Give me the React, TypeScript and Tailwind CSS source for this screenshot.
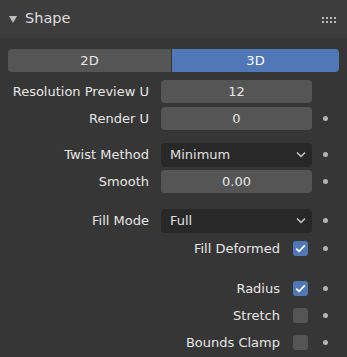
import React from "react"

const font = { fontFamily: '"DejaVu Sans", sans-serif' }

function Dot() {
  return (
    <div className="w-[35px] flex items-center">
      <span className="ml-[11px] w-[5px] h-[5px] rounded-full bg-[#b4b4b4]" />
    </div>
  )
}

function NoDot() {
  return <div className="w-[35px]" />
}

function NumRow({ label, value, dot = true, className = "" }: { label: string; value: string; dot?: boolean; className?: string }) {
  return (
    <div className={"flex items-center h-[23px] " + className}>
      <div className="w-[149px] text-right text-[#e6e6e6] text-[13px] leading-none">{label}</div>
      <div className="ml-[12px] w-[151px] h-[23px] rounded-[4px] bg-[#555555] flex items-center justify-center text-[#e6e6e6] text-[13px]">
        {value}
      </div>
      {dot ? <Dot /> : <NoDot />}
    </div>
  )
}

function SelectRow({ label, value, className = "" }: { label: string; value: string; className?: string }) {
  return (
    <div className={"flex items-center h-[23px] " + className}>
      <div className="w-[149px] text-right text-[#e6e6e6] text-[13px] leading-none">{label}</div>
      <div className="ml-[12px] w-[151px] h-[24px] rounded-[4px] bg-[#282828] flex items-center justify-between pl-[9px] pr-[6px] text-[#e0e0e0] text-[13px]">
        <span>{value}</span>
        <svg width="10" height="7" viewBox="0 0 10 7">
          <path d="M1 1.5 L5 5.5 L9 1.5" stroke="#c8c8c8" strokeWidth="1.5" fill="none" />
        </svg>
      </div>
      <Dot />
    </div>
  )
}

function CheckRow({ label, checked, className = "" }: { label: string; checked: boolean; className?: string }) {
  return (
    <div className={"flex items-center h-[23px] " + className}>
      <div className="w-[280px] text-right text-[#e6e6e6] text-[13px] leading-none">{label}</div>
      <div
        className={
          "ml-[13px] w-[15px] h-[15px] rounded-[3px] flex items-center justify-center " +
          (checked ? "bg-[#5078b7]" : "bg-[#555555]")
        }
      >
        {checked && (
          <svg width="11" height="9" viewBox="0 0 11 9">
            <path d="M1.2 4.6 L4 7.4 L9.8 1.3" stroke="#ffffff" strokeWidth="1.7" fill="none" strokeLinejoin="round" />
          </svg>
        )}
      </div>
      <div className="w-[39px] flex items-center">
        <span className="ml-[15px] w-[5px] h-[5px] rounded-full bg-[#b4b4b4]" />
      </div>
    </div>
  )
}

export default function App() {
  return (
    <div className="w-[347px] h-[357px] bg-[#363636] overflow-hidden" style={font}>
      {/* header */}
      <div className="h-[38px] bg-[#3d3d3d] flex items-center pl-[9px] pr-[11px]">
        <svg width="8" height="7" viewBox="0 0 8 7" className="mt-[1px]">
          <path d="M0 0 H8 L4 7 Z" fill="#bdbdbd" />
        </svg>
        <span className="ml-[8px] text-[14.5px] text-[#dedede]">Shape</span>
        <div className="ml-auto grid grid-cols-4 gap-x-[2px] gap-y-[2px] mt-[1px]">
          {Array.from({ length: 8 }).map((_, i) => (
            <span key={i} className="w-[2px] h-[2px] bg-[#bcbcbc]" />
          ))}
        </div>
      </div>

      {/* 2D / 3D toggle */}
      <div className="mt-[11px] mx-[8px] flex h-[23px] text-[13px]">
        <div className="w-[163px] rounded-l-[4px] bg-[#555555] flex items-center justify-center text-[#e6e6e6]">2D</div>
        <div className="w-[1px] bg-[#363636]" />
        <div className="flex-1 rounded-r-[4px] bg-[#5078b7] flex items-center justify-center text-[#ffffff]">3D</div>
      </div>

      <NumRow className="mt-[8px]" label="Resolution Preview U" value="12" dot={false} />
      <NumRow className="mt-[4px]" label="Render U" value="0" />

      <SelectRow className="mt-[13px]" label="Twist Method" value="Minimum" />
      <NumRow className="mt-[4px]" label="Smooth" value="0.00" />

      <SelectRow className="mt-[16px]" label="Fill Mode" value="Full" />
      <CheckRow className="mt-[5px]" label="Fill Deformed" checked />

      <CheckRow className="mt-[17px]" label="Radius" checked />
      <CheckRow className="mt-[4px]" label="Stretch" checked={false} />
      <CheckRow className="mt-[4px]" label="Bounds Clamp" checked={false} />
    </div>
  )
}
